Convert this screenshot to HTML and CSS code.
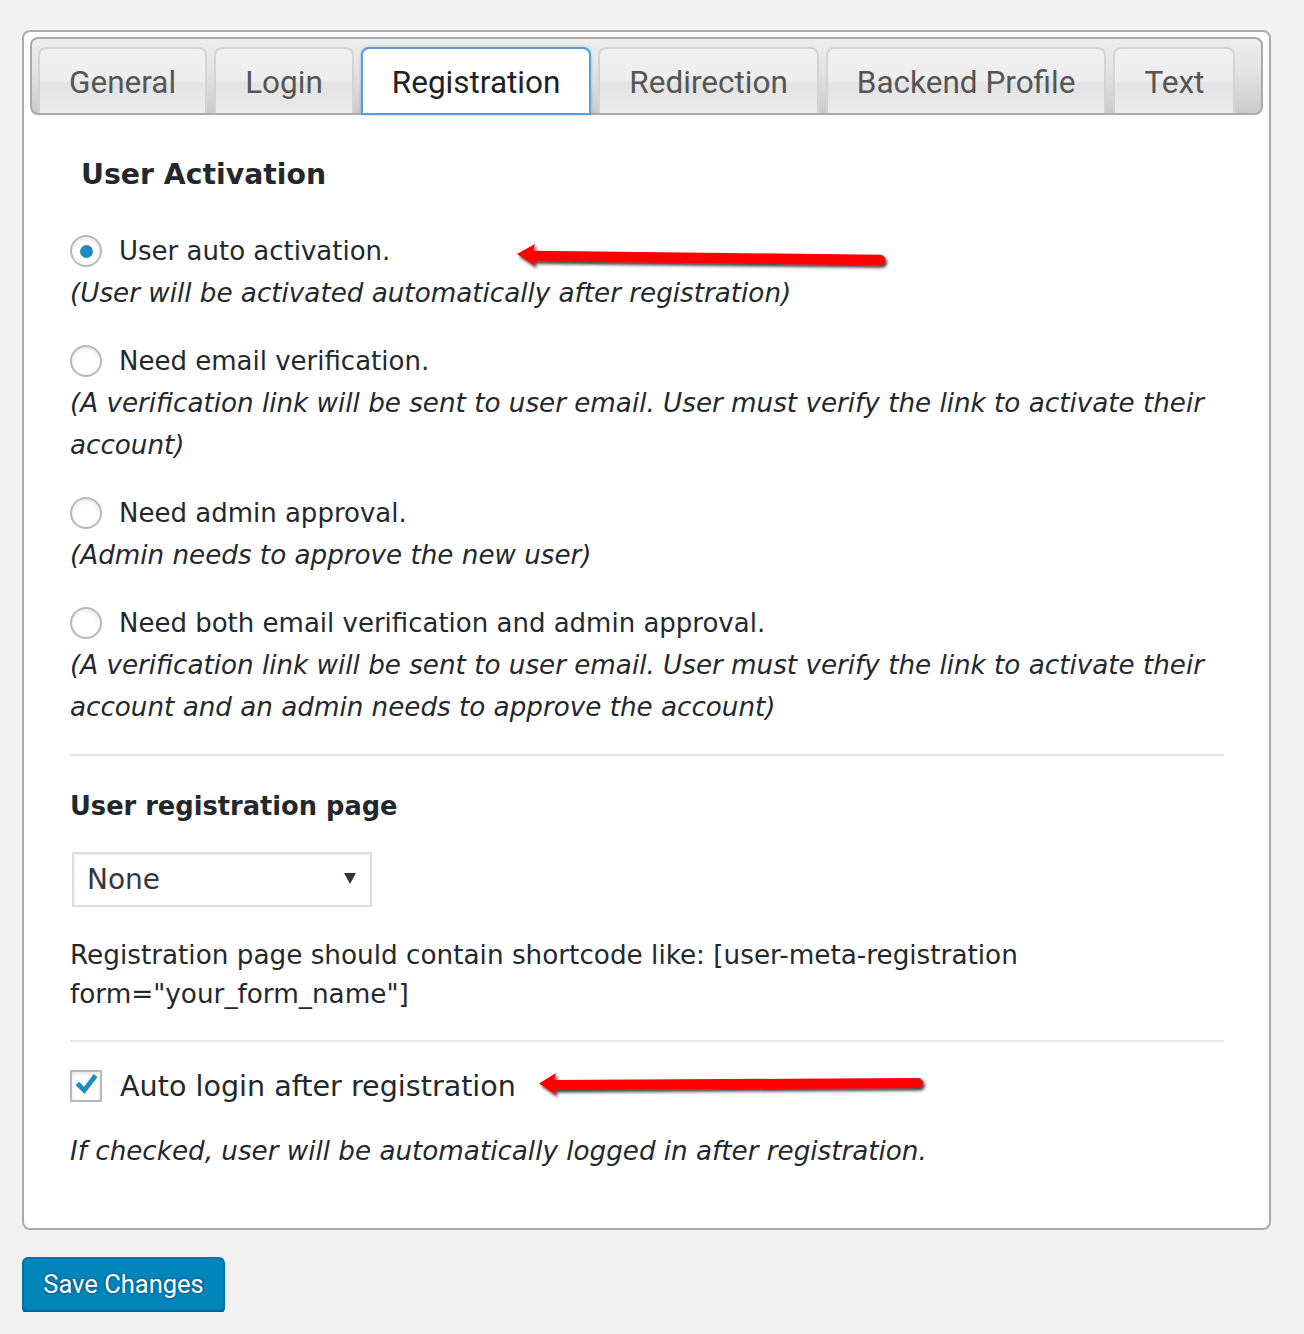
FILE: index.html
```html
<!DOCTYPE html>
<html lang="en">
<head>
<meta charset="utf-8">
<title>Registration settings</title>
<link rel="stylesheet" href="styles.css">
</head>
<body>
<div class="page">
  <div class="panel">
    <ul class="tabs">
      <li class="tab">General</li>
      <li class="tab">Login</li>
      <li class="tab active">Registration</li>
      <li class="tab">Redirection</li>
      <li class="tab">Backend Profile</li>
      <li class="tab">Text</li>
    </ul>
    <div class="content">
      <h3 class="section-title">User Activation</h3>
      <div class="option">
        <div class="choice"><span class="radio checked"></span><span class="choice-label">User auto activation.</span></div>
        <p class="desc">(User will be activated automatically after registration)</p>
      </div>
      <div class="option">
        <div class="choice"><span class="radio"></span><span class="choice-label">Need email verification.</span></div>
        <p class="desc">(A verification link will be sent to user email. User must verify the link to activate their account)</p>
      </div>
      <div class="option">
        <div class="choice"><span class="radio"></span><span class="choice-label">Need admin approval.</span></div>
        <p class="desc">(Admin needs to approve the new user)</p>
      </div>
      <div class="option">
        <div class="choice"><span class="radio"></span><span class="choice-label">Need both email verification and admin approval.</span></div>
        <p class="desc">(A verification link will be sent to user email. User must verify the link to activate their account and an admin needs to approve the account)</p>
      </div>
      <hr class="sep sep-first">
      <h4 class="field-title">User registration page</h4>
      <div class="select"><span>None</span><span class="caret"></span></div>
      <p class="note">Registration page should contain shortcode like: [user-meta-registration form="your_form_name"]</p>
      <hr class="sep sep-second">
      <div class="check-row">
        <span class="checkbox"><svg viewBox="0 0 32 32" width="28" height="28"><polyline points="6,13 14,21 27,4" fill="none" stroke="#1e8cbe" stroke-width="5.5"/></svg></span>
        <span class="check-label">Auto login after registration</span>
      </div>
      <p class="desc desc-check">If checked, user will be automatically logged in after registration.</p>
    </div>

    <svg class="arrow arrow-one" width="390" height="37" viewBox="0 0 390 37">
      <defs>
        <filter id="sh1" x="-5%" y="-40%" width="110%" height="180%">
          <feDropShadow dx="2" dy="2.5" stdDeviation="1.4" flood-color="#000" flood-opacity="0.75"/>
        </filter>
      </defs>
      <g filter="url(#sh1)">
        <line x1="26" y1="18" x2="375" y2="22" stroke="#ff0000" stroke-width="10.5" stroke-linecap="round"/>
        <polygon points="12,16 30,6 27,17 30,28" fill="#ff0000"/>
      </g>
    </svg>
    <svg class="arrow arrow-two" width="400" height="34" viewBox="0 0 400 34">
      <defs>
        <filter id="sh2" x="-5%" y="-40%" width="110%" height="180%">
          <feDropShadow dx="2" dy="2.5" stdDeviation="1.4" flood-color="#000" flood-opacity="0.75"/>
        </filter>
      </defs>
      <g filter="url(#sh2)">
        <line x1="22" y1="17" x2="388" y2="15" stroke="#ff0000" stroke-width="10" stroke-linecap="round"/>
        <polygon points="9,15.5 26,5 23,16 26,27" fill="#ff0000"/>
      </g>
    </svg>
  </div>
  <button class="save" type="button">Save Changes</button>
</div>
</body>
</html>
```
FILE: styles.css
```css
* { box-sizing: border-box; }
html, body { margin: 0; padding: 0; }
body {
  background: #f1f1f1;
  font-family: "DejaVu Sans", Verdana, sans-serif;
  color: #23282d;
}
.page {
  padding: 30px 0 0 22px;
  width: 1280px;
}
.panel {
  position: relative;
  width: 1249px;
  background: #fff;
  border: 2px solid #aaaaaa;
  border-radius: 8px;
  padding: 5px 6px 56px;
}
.tabs {
  display: flex;
  gap: 7px;
  list-style: none;
  margin: 0;
  padding: 8px 6px 0;
  height: 78px;
  border: 2px solid #aaaaaa;
  border-radius: 8px;
  background: linear-gradient(to bottom, #ededed 0%, #e2e2e2 45%, #cbcbcb 100%);
}
.tab {
  height: 66px;
  padding: 2px 29px 0;
  display: flex;
  align-items: center;
  border: 2px solid #d3d3d3;
  border-bottom: 0;
  border-radius: 8px 8px 0 0;
  background: linear-gradient(to bottom, #f0f0f0 0%, #ededed 50%, #e3e3e3 53%, #ebebeb 100%);
  font-family: Roboto, "Open Sans", sans-serif;
  font-size: 31.5px;
  color: #555555;
  white-space: nowrap;
}
.tab.active {
  height: 68px;
  margin-bottom: -2px;
  background: #ffffff;
  border: 2px solid #5b9dd9;
  color: #212121;
  box-shadow: 0 0 3px rgba(30, 140, 190, 0.45);
}
.content {
  padding: 40px 39px 0 40px;
}
.section-title {
  margin: 0 0 35px 11px;
  font-size: 28.3px;
  line-height: 40px;
  font-weight: bold;
  color: #23282d;
}
.option { margin-bottom: 26px; }
.option:last-of-type { margin-bottom: 0; }
.choice {
  display: flex;
  align-items: center;
  gap: 17px;
  height: 42px;
}
.choice-label {
  font-size: 26px;
  line-height: 42px;
}
.radio {
  flex: none;
  width: 32px;
  height: 32px;
  border: 2px solid #b4b9be;
  border-radius: 50%;
  background: #fff;
  box-shadow: inset 0 2px 4px rgba(0, 0, 0, 0.1);
  display: flex;
  align-items: center;
  justify-content: center;
}
.radio.checked::after {
  content: "";
  width: 13px;
  height: 13px;
  border-radius: 50%;
  background: #1e8cbe;
}
.desc {
  margin: 0;
  font-size: 26.2px;
  line-height: 42px;
  font-style: italic;
}
.sep {
  border: 0;
  height: 2px;
  background: #e5e5e5;
  margin: 0;
}
.sep-first { margin-top: 21px; }
.sep-second { margin-top: 26px; }
.field-title {
  margin: 31px 0 26px;
  font-size: 25.7px;
  line-height: 39px;
  font-weight: bold;
}
.select {
  margin-left: 2px;
  width: 300px;
  height: 55px;
  border: 2px solid #dddddd;
  box-shadow: inset 0 1px 2px rgba(0, 0, 0, 0.07);
  display: flex;
  align-items: center;
  justify-content: space-between;
  padding: 0 14px 0 13px;
  font-size: 28px;
  color: #32373c;
}
.caret {
  width: 0;
  height: 0;
  border-left: 6px solid transparent;
  border-right: 6px solid transparent;
  border-top: 11px solid #32373c;
  margin-top: -2px;
}
.note {
  margin: 29px 0 0;
  font-size: 26.28px;
  line-height: 39px;
}
.check-row {
  margin-top: 23px;
  height: 42px;
  display: flex;
  align-items: center;
  gap: 18px;
}
.checkbox {
  flex: none;
  width: 32px;
  height: 32px;
  border: 2px solid #b4b9be;
  background: #fff;
  box-shadow: inset 0 2px 4px rgba(0, 0, 0, 0.1);
  display: flex;
  align-items: center;
  justify-content: center;
}
.checkbox svg { display: block; }
.check-label {
  font-size: 28.6px;
  line-height: 42px;
}
.desc-check { margin-top: 23px; }
.arrow {
  position: absolute;
  pointer-events: none;
}
.arrow-one { left: 481px; top: 206px; }
.arrow-two { left: 506px; top: 1036px; }
.save {
  display: block;
  margin: 27px 0 0;
  width: 203px;
  height: 55px;
  padding: 0 0 2px;
  background: #0085ba;
  border: 2px solid #0073aa;
  border-bottom-color: #006799;
  border-radius: 6px;
  box-shadow: 0 2px 0 #006799;
  color: #fff;
  font-family: Roboto, "Open Sans", sans-serif;
  font-size: 25.5px;
  text-shadow: 0 -1px 2px #006799, 1px 0 2px #006799, 0 1px 2px #006799, -1px 0 2px #006799;
  cursor: pointer;
}
```
